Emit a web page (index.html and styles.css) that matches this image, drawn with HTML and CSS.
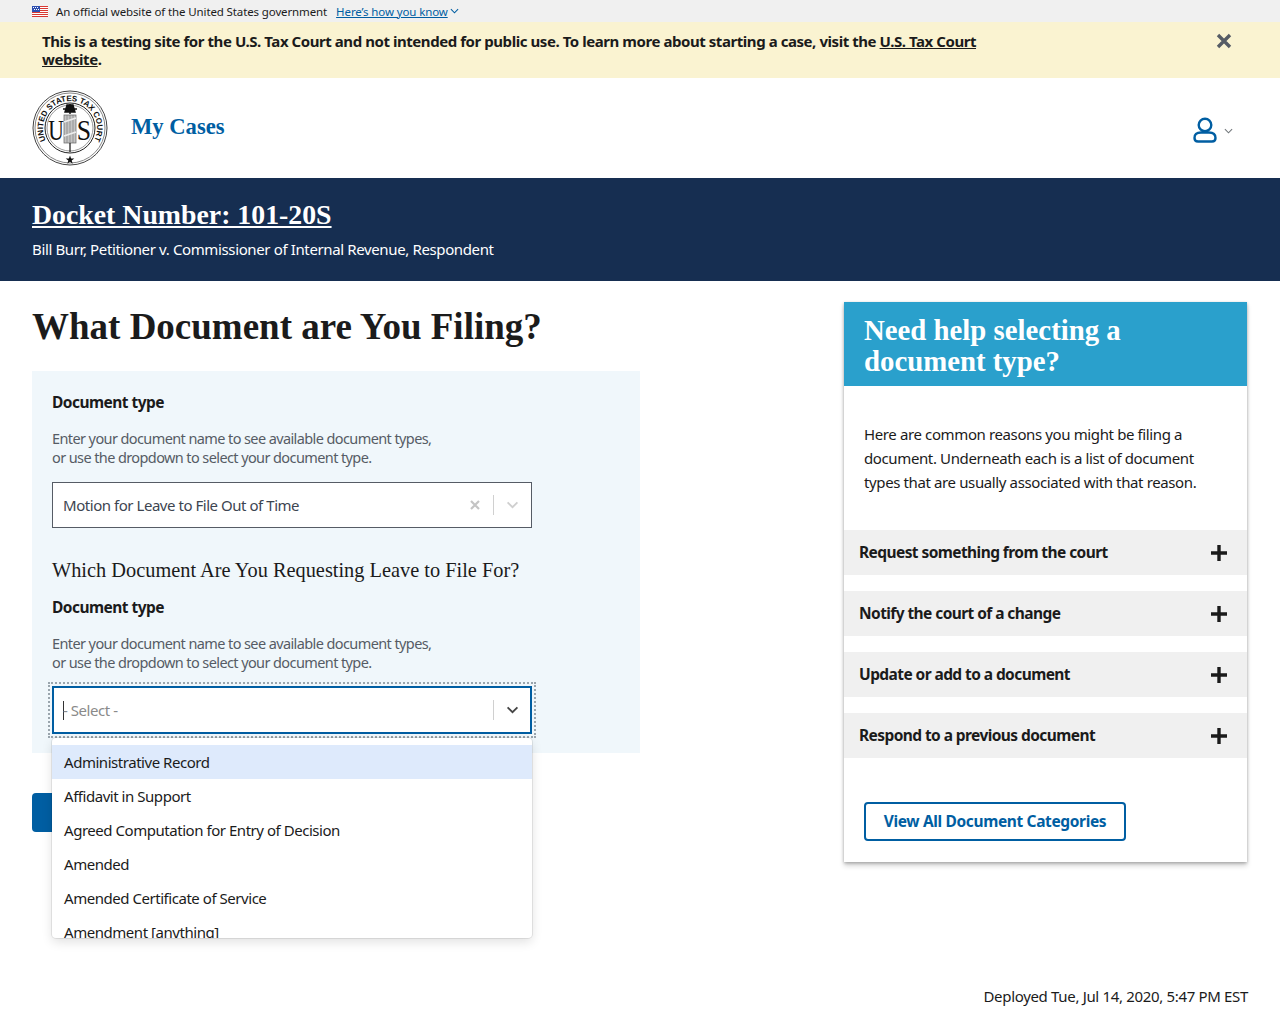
FILE: index.html
```html
<!DOCTYPE html>
<html lang="en">
<head>
<meta charset="utf-8">
<title>What Document are You Filing?</title>
<link rel="stylesheet" href="styles.css">
</head>
<body>
<div class="gov-banner">
  <svg class="flag" viewBox="0 0 16 11" width="16" height="11"><rect width="16" height="11" fill="#fff"/><g fill="#d83933"><rect width="16" height="1"/><rect y="2" width="16" height="1"/><rect y="4" width="16" height="1"/><rect y="6" width="16" height="1"/><rect y="8" width="16" height="1"/><rect y="10" width="16" height="1"/></g><rect width="8" height="6" fill="#2e4fb0"/><g fill="#fff"><rect x="1" y="1" width="1" height="1"/><rect x="3" y="1" width="1" height="1"/><rect x="5" y="1" width="1" height="1"/><rect x="2" y="3" width="1" height="1"/><rect x="4" y="3" width="1" height="1"/><rect x="6" y="3" width="1" height="1"/></g></svg>
  <span class="gov-text">An official website of the United States government</span>
  <a class="gov-link" href="#">Here’s how you know</a>
  <svg class="gov-chev" viewBox="0 0 10 6" width="9" height="6"><path d="M1 1l4 4 4-4" fill="none" stroke="#005ea2" stroke-width="1.2"/></svg>
</div>
<div class="alert">
  <p class="alert-text">This is a testing site for the U.S. Tax Court and not intended for public use. To learn more about starting a case, visit the <a href="#">U.S. Tax Court website</a>.</p>
  <svg class="alert-close" viewBox="0 0 16 16" width="16" height="16"><path d="M2 2l12 12M14 2L2 14" stroke="#565c65" stroke-width="3.4" fill="none"/></svg>
</div>
<header class="site-header">
  <svg class="seal" viewBox="0 0 76 76" width="76" height="76">
    <defs><path id="seal-arc" d="M 14 50.5 A 27 27 0 1 1 62 50.5"/></defs>
    <circle cx="38" cy="38" r="37" fill="#fff" stroke="#444" stroke-width="1"/>
    <circle cx="38" cy="38" r="35" fill="none" stroke="#888" stroke-width="1"/>
    <circle cx="38" cy="38" r="25" fill="none" stroke="#222" stroke-width="1"/>
    <circle cx="38" cy="38" r="23" fill="none" stroke="#555" stroke-width=".6"/>
    <text class="seal-ring"><textPath href="#seal-arc" startOffset="50%" text-anchor="middle" textLength="110">UNITED STATES TAX COURT</textPath></text>
    <rect x="32" y="25" width="12" height="28" fill="#c4c4c4" stroke="#666" stroke-width=".7"/>
    <path d="M35 25v28M38 25v28M41 25v28" stroke="#777" stroke-width=".6"/>
    <path d="M32 32l12-4M32 46l12-4" stroke="#eee" stroke-width="1.6"/>
    <path d="M31 19h14M38 14v10M35 15l-2 7h10l-2-7z" stroke="#111" stroke-width="1.400" fill="#111"/>
    <path d="M38 53v9" stroke="#111" stroke-width="1.200"/>
    <text class="seal-us" transform="translate(24 50) scale(.72 1)" text-anchor="middle">U</text>
    <text class="seal-us" transform="translate(52 50) scale(.86 1)" text-anchor="middle">S</text>
    <path d="M38 65.500l1.100 3.100h3.200l-2.600 2 1 3.100-2.700-1.900-2.700 1.900 1-3.100-2.600-2h3.200z" fill="#111"/>
  </svg>
  <a class="my-cases" href="#">My Cases</a>
  <div class="user-menu">
    <svg viewBox="0 0 24 26" width="24" height="26"><circle cx="12" cy="8" r="6.300" fill="none" stroke="#005ea2" stroke-width="2.400"/><path d="M5 24.500h14q3.500 0 3.500-3.500 0-5.500-6.500-5.500H8Q1.500 15.500 1.500 21q0 3.500 3.500 3.500z" fill="none" stroke="#005ea2" stroke-width="2.400"/></svg>
    <svg class="user-chev" viewBox="0 0 10 6" width="9" height="6"><path d="M1 1l4 4 4-4" fill="none" stroke="#71767a" stroke-width="1.200"/></svg>
  </div>
</header>
<section class="case-bar">
  <a class="docket" href="#">Docket Number: 101-20S</a>
  <p class="caption">Bill Burr, Petitioner v. Commissioner of Internal Revenue, Respondent</p>
</section>
<main class="content">
  <div class="left-col">
    <h1 class="page-title">What Document are You Filing?</h1>
    <form class="form-panel">
      <div class="label">Document type</div>
      <p class="hint">Enter your document name to see available document types,<br>or use the dropdown to select your document type.</p>
      <div class="select">
        <span class="select-value">Motion for Leave to File Out of Time</span>
        <svg class="select-x" viewBox="0 0 12 12" width="12" height="12"><path d="M2 2l8 8M10 2l-8 8" stroke="#c4c4c4" stroke-width="2.200"/></svg>
        <span class="select-sep"></span>
        <svg class="select-chev" viewBox="0 0 14 9" width="13" height="8"><path d="M1.500 1.500L7 7l5.500-5.500" fill="none" stroke="#cfcfcf" stroke-width="2"/></svg>
      </div>
      <h2 class="sub-title">Which Document Are You Requesting Leave to File For?</h2>
      <div class="label">Document type</div>
      <p class="hint">Enter your document name to see available document types,<br>or use the dropdown to select your document type.</p>
      <div class="select select-focus">
        <span class="caret"></span>
        <span class="select-placeholder">- Select -</span>
        <span class="select-sep"></span>
        <svg class="select-chev" viewBox="0 0 14 9" width="13" height="8"><path d="M1.500 1.500L7 7l5.500-5.500" fill="none" stroke="#444" stroke-width="2"/></svg>
        <ul class="menu">
          <li class="menu-item is-active">Administrative Record</li>
          <li class="menu-item">Affidavit in Support</li>
          <li class="menu-item">Agreed Computation for Entry of Decision</li>
          <li class="menu-item">Amended</li>
          <li class="menu-item">Amended Certificate of Service</li>
          <li class="menu-item">Amendment [anything]</li>
        </ul>
      </div>
    </form>
    <a class="primary-btn" href="#">Continue</a>
  </div>
  <aside class="help-card">
    <h2 class="help-title">Need help selecting a document type?</h2>
    <p class="help-text">Here are common reasons you might be filing a document. Underneath each is a list of document types that are usually associated with that reason.</p>
    <div class="accordion">
      <div class="acc-row"><span>Request something from the court</span><svg viewBox="0 0 16 16" width="16" height="16"><path d="M8 0v16M0 8h16" stroke="#1b1b1b" stroke-width="3.400"/></svg></div>
      <div class="acc-row"><span>Notify the court of a change</span><svg viewBox="0 0 16 16" width="16" height="16"><path d="M8 0v16M0 8h16" stroke="#1b1b1b" stroke-width="3.400"/></svg></div>
      <div class="acc-row"><span>Update or add to a document</span><svg viewBox="0 0 16 16" width="16" height="16"><path d="M8 0v16M0 8h16" stroke="#1b1b1b" stroke-width="3.400"/></svg></div>
      <div class="acc-row"><span>Respond to a previous document</span><svg viewBox="0 0 16 16" width="16" height="16"><path d="M8 0v16M0 8h16" stroke="#1b1b1b" stroke-width="3.400"/></svg></div>
    </div>
    <a class="outline-btn" href="#">View All Document Categories</a>
  </aside>
</main>
<footer class="deploy">Deployed Tue, Jul 14, 2020, 5:47 PM EST</footer>
</body>
</html>
```
FILE: styles.css
```css
* { box-sizing: border-box; }
html, body { margin: 0; padding: 0; }
body {
  font-family: "Noto Sans", "Liberation Sans", sans-serif;
  color: #1b1b1b;
  background: #fff;
  height: 1024px;
  overflow: hidden;
}
p, h1, h2, ul { margin: 0; padding: 0; }

.gov-banner {
  height: 22px;
  background: #f0f0f0;
  display: flex;
  align-items: center;
  padding-left: 32px;
  font-size: 11.500px;
  letter-spacing: -0.12px;
}
.flag { margin-right: 8px; }
.gov-text { margin-right: 9px; }
.gov-link { color: #005ea2; text-decoration: underline; }
.gov-chev { margin-left: 2px; }

.alert {
  height: 56px;
  background: #faf3d1;
  padding: 10px 48px 0 42px;
  display: flex;
  justify-content: space-between;
}
.alert-text {
  width: 950px;
  font-size: 15px;
  line-height: 18px;
  font-weight: 700;
  letter-spacing: -0.44px;
}
.alert-text a { color: #1b1b1b; }
.alert-close { margin-top: 1px; }

.site-header {
  height: 100px;
  display: flex;
  align-items: center;
  padding: 0 47px 0 32px;
}
.seal { flex: none; }
.seal-ring { font-family: "Liberation Sans", sans-serif; font-size: 8px; font-weight: 700; fill: #111; }
.seal-us { font-family: "Liberation Serif", serif; font-size: 30px; fill: #111; }
.my-cases {
  margin-left: 23px;
  margin-top: -3px;
  font-family: "Liberation Serif", serif;
  font-weight: 700;
  font-size: 22.600px;
  color: #005ea2;
  text-decoration: none;
}
.user-menu { margin-left: auto; margin-top: 4px; display: flex; align-items: center; gap: 7px; }
.user-chev { margin-top: 2px; }

.case-bar {
  height: 103px;
  background: #162e51;
  color: #fff;
  padding: 20px 32px 0;
}
.docket {
  display: block;
  font-family: "Liberation Serif", serif;
  font-weight: 700;
  font-size: 27.800px;
  line-height: 34px;
  color: #fff;
}
.caption { margin-top: 7px; font-size: 15px; line-height: 20px; letter-spacing: -0.37px; }

.content {
  display: flex;
  justify-content: space-between;
  padding: 0 32px;
  height: 695px;
}
.left-col { width: 608px; }
.page-title {
  margin-top: 24px;
  font-family: "Liberation Serif", serif;
  font-weight: 700;
  font-size: 37px;
  line-height: 44px;
  height: 66px;
}
.form-panel {
  height: 382px;
  background: #f0f7fb;
  padding: 20px 20px 0;
}
.label { font-size: 15.500px; line-height: 22px; font-weight: 700; letter-spacing: -0.53px; }
.hint {
  margin-top: 16px;
  font-size: 14.500px;
  line-height: 19px;
  color: #565c65;
  letter-spacing: -0.6px;
}
.select {
  position: relative;
  margin-top: 15px;
  width: 480px;
  height: 46px;
  background: #fff;
  border: 1px solid #565c65;
  display: flex;
  align-items: center;
  padding: 0 12px 0 10px;
  font-size: 15px;
  letter-spacing: -0.46px;
}
.select-value { flex: 1; color: #3d4551; }
.select-x { margin-right: 12px; }
.select-sep { width: 1px; height: 20px; background: #d0d0d0; margin-right: 12px; }
.select-focus {
  margin-top: 14px;
  height: 48px;
  border: 2px solid #005ea2;
  outline: 2px dotted #9aa5ad;
  outline-offset: 2px;
  padding: 0 11px 0 9px;
}
.caret { width: 1px; height: 19px; background: #333; }
.select-placeholder { flex: 1; margin-left: -1px; color: #8a8a8a; }
.menu {
  position: absolute;
  left: -2px;
  top: 50px;
  width: 480px;
  height: 200px;
  padding-top: 7px;
  list-style: none;
  background: #fff;
  border-radius: 4px;
  overflow: hidden;
  box-shadow: 0 0 0 1px rgba(0,0,0,.08), 0 4px 11px rgba(0,0,0,.12);
  z-index: 2;
}
.menu-item { height: 34px; line-height: 34px; padding-left: 12px; color: #1b1b1b; }
.menu-item.is-active { background: #deeafc; }

.sub-title {
  margin-top: 30px;
  font-family: "Liberation Serif", serif;
  font-weight: 400;
  font-size: 20.350px;
  line-height: 24px;
  margin-bottom: 14px;
}
.primary-btn {
  display: block;
  margin-top: 40px;
  width: 120px;
  height: 39px;
  border-radius: 4px;
  background: #005ea2;
  color: #fff;
  font-weight: 700;
  font-size: 15px;
  line-height: 39px;
  text-align: center;
  text-decoration: none;
}

.help-card {
  margin-top: 21px;
  margin-right: 1px;
  width: 403px;
  height: 560px;
  background: #fff;
  box-shadow: 0 1px 3px rgba(0,0,0,.28), 0 4px 5px rgba(0,0,0,.16);
}
.help-title {
  height: 84px;
  background: #2aa0cc;
  color: #fff;
  padding: 13px 100px 0 20px;
  font-family: "Liberation Serif", serif;
  font-weight: 700;
  font-size: 28.800px;
  line-height: 31px;
}
.help-text {
  padding: 36px 20px 0;
  height: 144px;
  font-size: 15px;
  line-height: 24px;
  letter-spacing: -0.38px;
}
.accordion { display: flex; flex-direction: column; gap: 16px; }
.acc-row {
  height: 45px;
  background: #f0f0f0;
  display: flex;
  align-items: center;
  justify-content: space-between;
  padding: 0 20px 0 15px;
  font-size: 15.500px;
  font-weight: 700;
  letter-spacing: -0.58px;
}
.acc-row span { margin-top: -2px; }
.outline-btn {
  display: inline-block;
  margin: 44px 0 0 20px;
  width: 262px;
  height: 39px;
  border: 2px solid #005ea2;
  border-radius: 4px;
  color: #005ea2;
  font-size: 15.500px;
  font-weight: 700;
  line-height: 35px;
  text-align: center;
  letter-spacing: -0.36px;
  text-decoration: none;
}
.deploy {
  padding-right: 32px;
  text-align: right;
  font-size: 15px;
  letter-spacing: -0.33px;
  line-height: 20px;
  margin-top: 10px;
}
```
